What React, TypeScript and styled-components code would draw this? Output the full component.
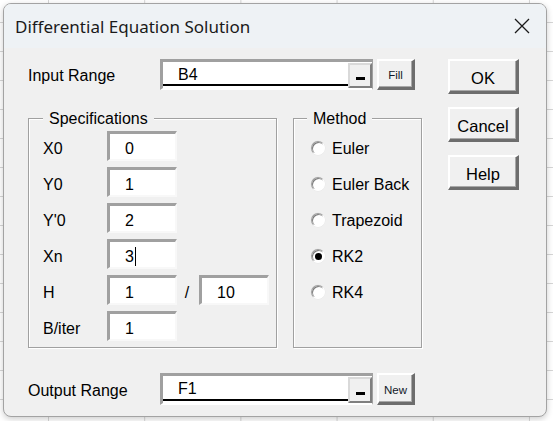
import styled, { createGlobalStyle } from 'styled-components';

const GlobalStyle = createGlobalStyle`
  html, body {
    margin: 0;
    padding: 0;
  }
  body {
    width: 553px;
    height: 421px;
    overflow: hidden;
    background-color: #ffffff;
    background-image:
      linear-gradient(to right, #d6d6d6 1px, transparent 1px),
      linear-gradient(to bottom, #d6d6d6 1px, transparent 1px);
    background-size: 96.2px 29px;
    background-position: 48px 22px;
    font-family: "Liberation Sans", Arial, sans-serif;
  }
`;

const Dialog = styled.div`
  position: absolute;
  left: 3px;
  top: 3px;
  width: 544px;
  height: 414px;
  box-sizing: border-box;
  border: 1px solid #a3a3a3;
  border-radius: 8px;
  background: #f0f0f0;
  overflow: hidden;
  display: flex;
  flex-direction: column;
  box-shadow: 0 2px 6px rgba(0, 0, 0, 0.2);
`;

const TitleBar = styled.div`
  height: 44px;
  flex-shrink: 0;
  display: flex;
  align-items: center;
  justify-content: space-between;
  padding: 0 16px 0 11px;
  background: #eef2f5;
  color: #1a1a1a;
  font-family: "Noto Sans", "Open Sans", sans-serif;
  font-size: 17px;
`;

const Body = styled.div`
  flex: 1;
  display: grid;
  grid-template-columns: 394px 71px;
  column-gap: 26px;
  padding: 11px 0 0 24px;
  color: #000;
  font-size: 16px;
`;

const LeftColumn = styled.div`
  display: flex;
  flex-direction: column;
`;

const RangeRow = styled.div<{ $top: number; $height: number }>`
  display: flex;
  align-items: center;
  height: ${(p) => p.$height}px;
  margin-top: ${(p) => p.$top}px;
`;

const RangeLabel = styled.span`
  width: 132px;
  padding-top: 3px;
`;

const RefEdit = styled.div`
  width: 213px;
  height: 100%;
  box-sizing: border-box;
  display: flex;
  align-items: stretch;
  border-style: solid;
  border-width: 3px 1px 2px 3px;
  border-color: #a0a0a0 #a0a0a0 #ffffff #a0a0a0;
  background: #ffffff;
`;

const RefField = styled.div`
  flex: 1;
  display: flex;
  align-items: center;
  padding: 3px 0 0 15px;
  margin-bottom: 2px;
  border-bottom: 2px solid #000;
`;

const RefButton = styled.div`
  width: 24px;
  margin: 1px 0 0 0;
  box-sizing: border-box;
  display: flex;
  align-items: flex-end;
  justify-content: center;
  padding-bottom: 6px;
  background: #f0f0f0;
  border-style: solid;
  border-width: 2px;
  border-color: #d9d9d9 #808080 #808080 #d9d9d9;
`;

const RefBar = styled.span`
  width: 9px;
  height: 3px;
  background: #000;
`;

const Raised = styled.div`
  box-sizing: border-box;
  display: flex;
  align-items: center;
  justify-content: center;
  background: #f0f0f0;
  border-style: solid;
  border-width: 2px 3px 3px 2px;
  border-color: #ffffff #6d6d6d #6d6d6d #ffffff;
  box-shadow: inset -1px -1px 0 #a8a8a8;
`;

const SmallButton = styled(Raised)`
  width: 38px;
  height: 100%;
  margin-left: 4px;
  padding-top: 2px;
  font-size: 11.5px;
  color: #101828;
`;

const DialogButton = styled(Raised)`
  width: 71px;
  height: 35px;
  padding-top: 4px;
  font-size: 16.5px;
`;

const ButtonColumn = styled.div`
  display: flex;
  flex-direction: column;
  gap: 13px;
`;

const FramesRow = styled.div`
  display: flex;
  gap: 16px;
  margin-top: 28px;
  height: 230px;
`;

const Frame = styled.div<{ $width: number }>`
  position: relative;
  width: ${(p) => p.$width}px;
  box-sizing: border-box;
  border: 1px solid #a0a0a0;
  box-shadow: inset 1px 1px 0 #ffffff, 1px 1px 0 #ffffff;
`;

const Legend = styled.span<{ $left: number }>`
  position: absolute;
  top: -9px;
  left: ${(p) => p.$left}px;
  padding: 0 6px;
  line-height: 18px;
  background: #f0f0f0;
`;

const SpecGrid = styled.div`
  display: grid;
  grid-template-columns: 64px 70px 22px 70px;
  grid-auto-rows: 30px;
  row-gap: 6px;
  align-items: center;
  padding: 12px 0 0 14px;
`;

const SpecLabel = styled.span`
  grid-column: 1;
  padding-top: 5px;
`;

const TextBox = styled.div<{ $col?: number }>`
  grid-column: ${(p) => p.$col ?? 2};
  height: 30px;
  box-sizing: border-box;
  display: flex;
  align-items: center;
  padding: 4px 0 0 15px;
  background: #ffffff;
  border-style: solid;
  border-width: 3px 2px 2px 3px;
  border-color: #a0a0a0 #f8f8f8 #f8f8f8 #a0a0a0;
`;

const Caret = styled.span`
  display: inline-block;
  width: 1px;
  height: 19px;
  margin-left: 1px;
  background: #000;
`;

const Slash = styled.span`
  grid-column: 3;
  text-align: center;
  padding: 5px 2px 0 0;
`;

const RadioList = styled.div`
  display: flex;
  flex-direction: column;
  padding: 11px 0 0 17px;
`;

const RadioRow = styled.div`
  height: 36px;
  display: flex;
  align-items: center;
  gap: 7px;

  & > span:last-child {
    padding-top: 2px;
  }
`;

const Radio = styled.span<{ $checked?: boolean }>`
  width: 14px;
  height: 14px;
  box-sizing: border-box;
  border-radius: 50%;
  display: flex;
  align-items: center;
  justify-content: center;
  background: #ffffff;
  border: 1px solid;
  border-color: #a0a0a0 #ffffff #ffffff #a0a0a0;
  box-shadow: inset 1px 1px 0 #7a7a7a, 0 0 0 0.5px #e8e8e8;

  &::after {
    content: '';
    display: ${(p) => (p.$checked ? 'block' : 'none')};
    width: 7px;
    height: 7px;
    border-radius: 50%;
    background: #000;
  }
`;

const specs = [
  { label: 'X0', value: '0' },
  { label: 'Y0', value: '1' },
  { label: "Y'0", value: '2' },
  { label: 'Xn', value: '3', caret: true },
  { label: 'H', value: '1', extra: '10' },
  { label: 'B/iter', value: '1' },
];

const methods = ['Euler', 'Euler Back', 'Trapezoid', 'RK2', 'RK4'];

function CloseIcon() {
  return (
    <svg width="16" height="16" viewBox="0 0 16 16">
      <path d="M1 1 L15 15 M15 1 L1 15" stroke="#1a1a1a" strokeWidth="1.3" fill="none" />
    </svg>
  );
}

export default function App() {
  return (
    <>
      <GlobalStyle />
      <Dialog>
        <TitleBar>
          <span>Differential Equation Solution</span>
          <CloseIcon />
        </TitleBar>
        <Body>
          <LeftColumn>
            <RangeRow $top={0} $height={31}>
              <RangeLabel>Input Range</RangeLabel>
              <RefEdit>
                <RefField>B4</RefField>
                <RefButton>
                  <RefBar />
                </RefButton>
              </RefEdit>
              <SmallButton>Fill</SmallButton>
            </RangeRow>

            <FramesRow>
              <Frame $width={249}>
                <Legend $left={14}>Specifications</Legend>
                <SpecGrid>
                  {specs.map((s) => (
                    <>
                      <SpecLabel key={s.label}>{s.label}</SpecLabel>
                      <TextBox>
                        {s.value}
                        {s.caret && <Caret />}
                      </TextBox>
                      {s.extra && (
                        <>
                          <Slash>/</Slash>
                          <TextBox $col={4}>{s.extra}</TextBox>
                        </>
                      )}
                    </>
                  ))}
                </SpecGrid>
              </Frame>
              <Frame $width={129}>
                <Legend $left={13}>Method</Legend>
                <RadioList>
                  {methods.map((m) => (
                    <RadioRow key={m}>
                      <Radio $checked={m === 'RK2'} />
                      <span>{m}</span>
                    </RadioRow>
                  ))}
                </RadioList>
              </Frame>
            </FramesRow>

            <RangeRow $top={25} $height={32}>
              <RangeLabel>Output Range</RangeLabel>
              <RefEdit>
                <RefField>F1</RefField>
                <RefButton>
                  <RefBar />
                </RefButton>
              </RefEdit>
              <SmallButton>New</SmallButton>
            </RangeRow>
          </LeftColumn>

          <ButtonColumn>
            <DialogButton>OK</DialogButton>
            <DialogButton>Cancel</DialogButton>
            <DialogButton>Help</DialogButton>
          </ButtonColumn>
        </Body>
      </Dialog>
    </>
  );
}
